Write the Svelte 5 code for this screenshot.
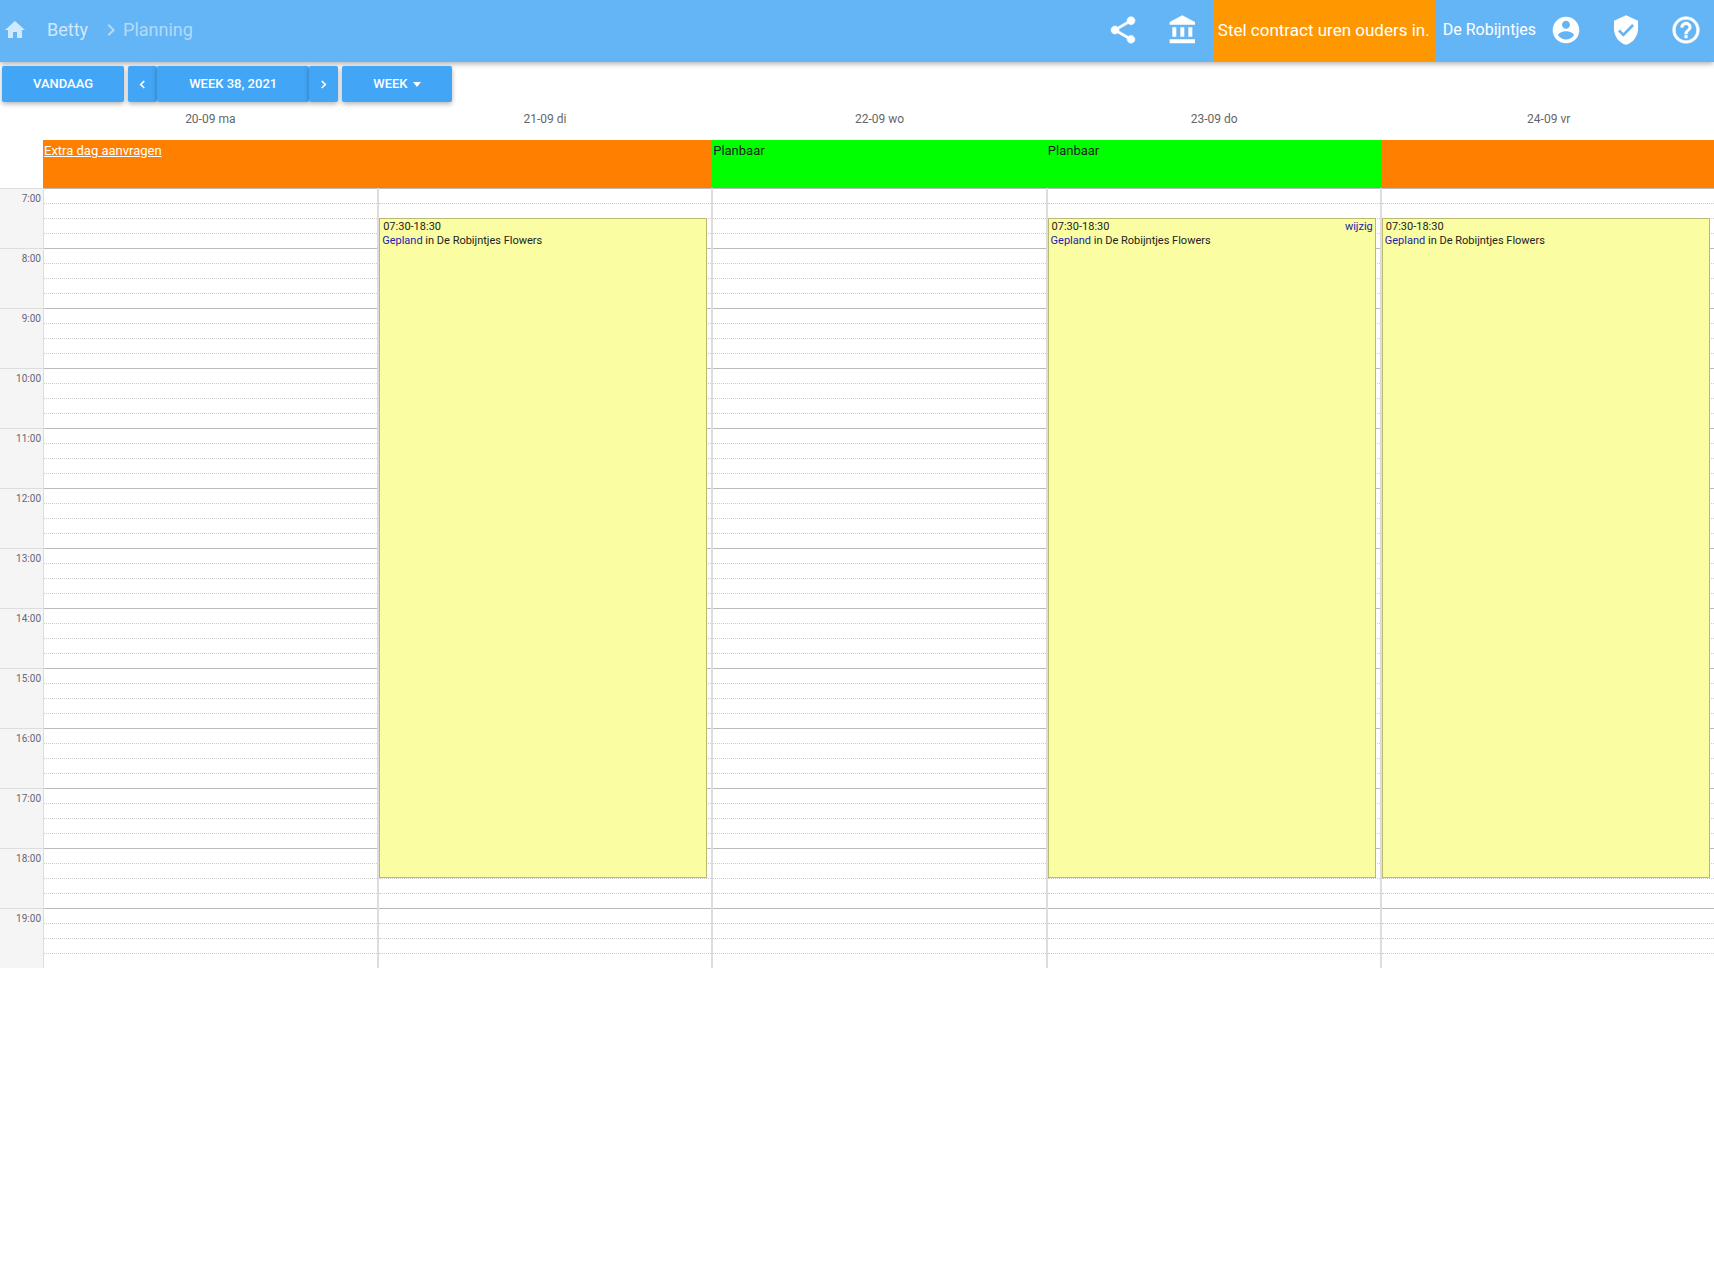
<script>
  const FIRST_HOUR = 7;
  const HOUR_COUNT = 13;
  const HOUR_HEIGHT = 60;

  const hours = Array.from({ length: HOUR_COUNT }, (_, i) => FIRST_HOUR + i);

  const days = [
    { label: '20-09 ma', status: 'request' },
    { label: '21-09 di', status: 'closed', from: '07:30', to: '18:30' },
    { label: '22-09 wo', status: 'open' },
    { label: '23-09 do', status: 'open', from: '07:30', to: '18:30', editable: true },
    { label: '24-09 vr', status: 'closed', from: '07:30', to: '18:30' }
  ];

  function toOffset(time) {
    const [h, m] = time.split(':').map(Number);
    return (h - FIRST_HOUR) * HOUR_HEIGHT + (m * HOUR_HEIGHT) / 60;
  }
</script>

<header class="navbar">
  <nav class="breadcrumbs">
    <a href="#home" class="home" aria-label="Home">
      <svg viewBox="0 0 24 24"><path d="M10 20v-6h4v6h5v-8h3L12 3 2 12h3v8z" /></svg>
    </a>
    <a href="#betty" class="crumb">Betty</a>
    <svg class="chevron" viewBox="0 0 24 24"><path d="M10 6L8.59 7.41 13.17 12l-4.58 4.59L10 18l6-6z" /></svg>
    <a href="#planning" class="crumb current">Planning</a>
  </nav>
  <nav class="actions">
    <a href="#share" class="icon bold" aria-label="Delen">
      <svg viewBox="0 0 24 24"
        ><path
          d="M18 16.08c-.76 0-1.44.3-1.96.77L8.91 12.7c.05-.23.09-.46.09-.7s-.04-.47-.09-.7l7.05-4.11c.54.5 1.25.81 2.04.81 1.66 0 3-1.34 3-3s-1.34-3-3-3-3 1.34-3 3c0 .24.04.47.09.7L8.04 9.81C7.5 9.31 6.79 9 6 9c-1.66 0-3 1.34-3 3s1.34 3 3 3c.79 0 1.5-.31 2.04-.81l7.12 4.16c-.05.21-.08.43-.08.65 0 1.61 1.31 2.92 2.92 2.92s2.92-1.31 2.92-2.92-1.31-2.92-2.92-2.92z"
        /></svg
      >
    </a>
    <a href="#bank" class="icon" aria-label="Financieel">
      <svg viewBox="0 0 24 24"
        ><path d="M4 10v7h3v-7H4zm6 0v7h3v-7h-3zM2 22h19v-3H2v3zm14-12v7h3v-7h-3zm-4.500-9L2 6v2h19V6l-9.500-5z" /></svg
      >
    </a>
    <a href="#contract" class="notice">Stel contract uren ouders in.</a>
    <a href="#locatie" class="location">De Robijntjes</a>
    <a href="#account" class="icon" aria-label="Account">
      <svg viewBox="0 0 24 24"
        ><path
          d="M12 2C6.480 2 2 6.480 2 12s4.480 10 10 10 10-4.480 10-10S17.520 2 12 2zm0 3c1.660 0 3 1.340 3 3s-1.340 3-3 3-3-1.340-3-3 1.340-3 3-3zm0 14.200c-2.500 0-4.710-1.280-6-3.220.03-1.990 4-3.080 6-3.080 1.990 0 5.970 1.090 6 3.080-1.290 1.940-3.500 3.220-6 3.220z"
        /></svg
      >
    </a>
    <a href="#privacy" class="icon" aria-label="Privacy">
      <svg viewBox="0 0 24 24"
        ><path
          d="M12 1L3 5v6c0 5.550 3.840 10.740 9 12 5.160-1.260 9-6.450 9-12V5l-9-4zm-2 16l-4-4 1.410-1.410L10 14.170l6.590-6.590L18 9l-8 8z"
        /></svg
      >
    </a>
    <a href="#help" class="icon bold" aria-label="Help">
      <svg viewBox="0 0 24 24"
        ><path
          d="M11 18h2v-2h-2v2zm1-16C6.480 2 2 6.480 2 12s4.480 10 10 10 10-4.480 10-10S17.520 2 12 2zm0 18c-4.410 0-8-3.590-8-8s3.590-8 8-8 8 3.590 8 8-3.590 8-8 8zm0-14c-2.210 0-4 1.790-4 4h2c0-1.100.9-2 2-2s2 .9 2 2c0 2-3 1.750-3 5h2c0-2.250 3-2.500 3-5 0-2.210-1.790-4-4-4z"
        /></svg
      >
    </a>
  </nav>
</header>

<div class="toolbar">
  <button>Vandaag</button>
  <div class="group">
    <button class="step" aria-label="Vorige week">
      <svg viewBox="0 0 8 10"><path d="M6 1L2 5l4 4" /></svg>
    </button>
    <button class="period">Week 38, 2021</button>
    <button class="step" aria-label="Volgende week">
      <svg viewBox="0 0 8 10"><path d="M2 1l4 4-4 4" /></svg>
    </button>
  </div>
  <button>Week <span class="caret"></span></button>
</div>

<main>
  <div class="row dates">
    {#each days as day}
      <div class="date">{day.label}</div>
    {/each}
  </div>

  <div class="row statuses">
    {#each days as day}
      <div class="status" class:open={day.status === 'open'}>
        {#if day.status === 'request'}
          <a href="#aanvragen">Extra dag aanvragen</a>
        {:else if day.status === 'open'}
          Planbaar
        {/if}
      </div>
    {/each}
  </div>

  <div class="row schedule">
    <div class="hours">
      {#each hours as hour}
        <div class="hour">{hour}:00</div>
      {/each}
    </div>
    {#each days as day}
      <div class="day">
        {#each hours as hour}
          <div class="slot full"></div>
          <div class="slot"></div>
          <div class="slot"></div>
          <div class="slot"></div>
        {/each}
        {#if day.from}
          <article class="event" style="top: {toOffset(day.from)}px; height: {toOffset(day.to) - toOffset(day.from)}px">
            <div class="event__head">
              <span>{day.from}-{day.to}</span>
              {#if day.editable}
                <a href="#wijzig">wijzig</a>
              {/if}
            </div>
            <div class="event__body"><a href="#gepland">Gepland</a> in De Robijntjes Flowers</div>
          </article>
        {/if}
      </div>
    {/each}
  </div>
</main>

<style>
  :global(body) {
    background: #fff;
    color: #222;
    font-family: Roboto, 'Liberation Sans', sans-serif;
  }
  a {
    color: inherit;
    text-decoration: none;
  }
  svg {
    display: block;
    fill: currentColor;
  }

  .navbar {
    display: flex;
    justify-content: space-between;
    height: 62px;
    background: #64b5f6;
    color: #fff;
    box-shadow: 0 2px 5px rgba(0, 0, 0, 0.3);
  }
  .breadcrumbs,
  .actions {
    display: flex;
    align-items: center;
  }
  .breadcrumbs {
    font-size: 18px;
    line-height: 60px;
    padding-bottom: 2px;
  }
  .home {
    margin: 0 20px 0 3px;
    opacity: 0.7;
  }
  .home svg {
    width: 24px;
    height: 24px;
  }
  .crumb {
    color: rgba(255, 255, 255, 0.7);
  }
  .crumb.current {
    color: rgba(255, 255, 255, 0.5);
  }
  .chevron {
    width: 24px;
    height: 24px;
    margin: 0 0 0 11px;
    opacity: 0.5;
  }
  .icon {
    padding: 0 14px 2px;
  }
  .icon:last-child {
    padding-right: 12px;
  }
  .icon svg {
    width: 32px;
    height: 32px;
  }
  .icon.bold path {
    stroke: currentColor;
    stroke-width: 0.4;
  }
  .notice,
  .location {
    line-height: 60px;
    padding-bottom: 2px;
  }
  .notice {
    padding-left: 5px;
    padding-right: 5px;
    background: #ff9800;
    font-size: 17px;
  }
  .location {
    padding-left: 8px;
    font-size: 16px;
  }

  .toolbar {
    display: flex;
    gap: 4px;
    padding: 4px 2px 0;
  }
  .group {
    display: flex;
  }
  button {
    height: 36px;
    padding: 0 31px 2px;
    border: none;
    border-radius: 2px;
    background: #42a5f5;
    color: #fff;
    font-family: inherit;
    font-size: 13px;
    font-weight: 500;
    text-transform: uppercase;
    box-shadow: 0 2px 5px rgba(0, 0, 0, 0.3);
    cursor: pointer;
  }
  .period {
    padding: 0 32px 2px;
  }
  .step {
    padding: 0 11px;
  }
  .step svg {
    width: 7px;
    height: 9px;
    fill: none;
    stroke: currentColor;
    stroke-width: 2;
  }
  .caret {
    display: inline-block;
    margin-left: 2px;
    border: 4px solid transparent;
    border-top: 5px solid currentColor;
    border-bottom: none;
    vertical-align: middle;
  }

  main {
    overflow: hidden;
  }
  .row {
    display: grid;
    grid-template-columns: repeat(5, 1fr);
    padding-left: 43px;
  }
  .dates,
  .statuses {
    margin-right: -2px;
  }
  .date {
    padding: 9px 0 13px;
    font-size: 12px;
    line-height: 16px;
    color: #666;
    text-align: center;
  }
  .status {
    height: 46px;
    padding: 2px 1px 0;
    background: #ff8000;
    font-size: 13px;
    line-height: 18px;
  }
  .status.open {
    background: #0f0;
  }
  .status a {
    color: #fff;
    text-decoration: underline;
  }

  .schedule {
    grid-template-columns: 43px repeat(5, 1fr);
    padding-left: 0;
  }
  .hours {
    background: #f5f5f5;
  }
  .hour {
    box-sizing: border-box;
    height: 60px;
    padding: 3px 2px 0 0;
    border-top: 1px solid #ddd;
    color: #667;
    font-size: 10px;
    line-height: 14px;
    text-align: right;
  }
  .day {
    position: relative;
    border-left: 2px solid #ddd;
  }
  .hours + .day {
    border-left-width: 1px;
  }
  .slot {
    box-sizing: border-box;
    height: 15px;
    border-top: 1px dotted #ccc;
  }
  .slot.full {
    border-top: 1px solid #bbb;
  }
  .event {
    position: absolute;
    left: 0;
    right: 4px;
    box-sizing: border-box;
    border: 1px solid #bbba6e;
    background: #fafda2;
    font-size: 11px;
    line-height: 14px;
  }
  .event a {
    color: #2222b0;
  }
  .event__head {
    display: flex;
    justify-content: space-between;
    padding: 1px 2px 0 3px;
  }
  .event__body {
    padding: 0 2px;
  }
</style>
